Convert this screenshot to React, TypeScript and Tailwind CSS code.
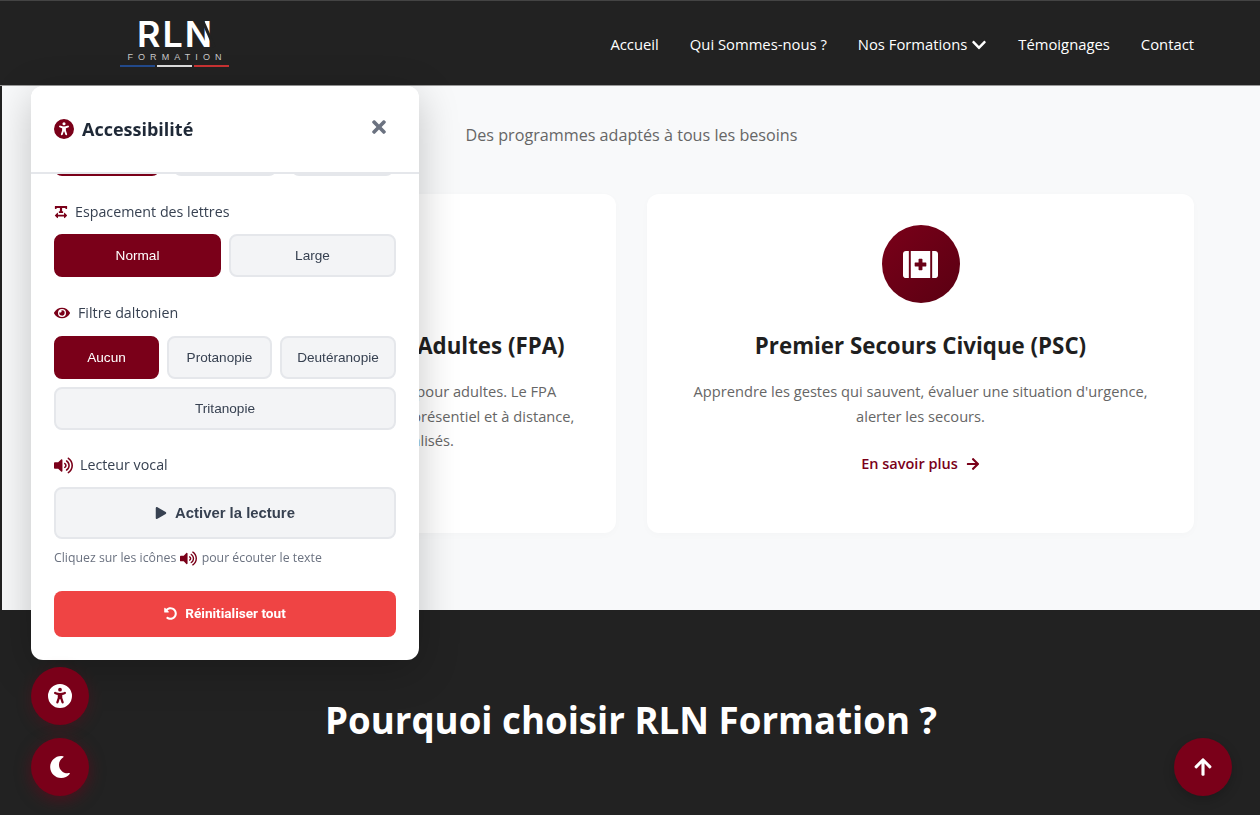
import { FaTimes, FaTextWidth, FaEye, FaVolumeUp, FaPlay, FaUndoAlt, FaMoon, FaArrowUp, FaArrowRight, FaChevronDown, FaFirstAid } from "react-icons/fa";
import { FaUniversalAccess } from "react-icons/fa6";

const sans = "font-['Open_Sans','Noto_Sans',sans-serif]";

function Opt({ active, className = "", children }: { active?: boolean; className?: string; children: React.ReactNode }) {
  return (
    <button className={`h-[43px] pt-[1px] rounded-lg border-2 text-[13.6px] font-['Liberation_Sans',sans-serif] ${active ? "bg-[#7a0019] border-[#7a0019] text-white font-medium" : "bg-[#f3f4f6] border-[#e5e7eb] text-[#374151]"} ${className}`}>
      {children}
    </button>
  );
}

function Label({ icon, children, gap = "gap-2" }: { icon: React.ReactNode; children: React.ReactNode; gap?: string }) {
  return (
    <div className={`flex items-center ${gap} h-5 text-[14.25px] font-medium text-[#374151] ${sans}`}>
      <span className="text-[#7a0019]">{icon}</span>
      <span>{children}</span>
    </div>
  );
}

function Panel() {
  return (
    <div className="fixed left-[31px] top-[86px] w-[388px] h-[574px] bg-white rounded-xl shadow-[0_10px_40px_rgba(0,0,0,0.22)] flex flex-col overflow-hidden z-20">
      <div className="h-[88px] shrink-0 border-b-2 border-[#e5e7eb] flex items-center justify-between pl-[23px] pr-[30px] bg-white relative z-10">
        <div className={`flex items-center gap-2 text-[18px] font-bold text-[#1f2937] ${sans}`}>
          <FaUniversalAccess className="text-[#7a0019] text-[20px]" />
          <span>Accessibilité</span>
        </div>
        <FaTimes className="text-[#6b7280] text-[20px] mb-[5px]" />
      </div>
      <div className="flex-1 overflow-hidden px-[23px]">
        <div className="flex gap-2 -mt-[41px] mb-[26px]">
          <Opt active className="w-[106px]">Normal</Opt>
          <Opt className="w-[104px] ml-[5px]">Grand</Opt>
          <Opt className="w-[103px] ml-[6px]">Très grand</Opt>
        </div>
        <Label gap="gap-[7px]" icon={<FaTextWidth className="text-[14px]" />}>Espacement des lettres</Label>
        <div className="grid grid-cols-2 gap-2 mt-[12px]">
          <Opt active>Normal</Opt>
          <Opt>Large</Opt>
        </div>
        <div className="mt-[26px]">
          <Label icon={<FaEye className="text-[16px]" />}>Filtre daltonien</Label>
        </div>
        <div className="flex flex-wrap gap-2 mt-[13px]">
          <Opt active className="w-[105px]">Aucun</Opt>
          <Opt className="w-[105px]">Protanopie</Opt>
          <Opt className="flex-1">Deutéranopie</Opt>
          <Opt className="w-full">Tritanopie</Opt>
        </div>
        <div className="mt-[25px]">
          <Label icon={<FaVolumeUp className="text-[19px]" />} gap="gap-[7px]">Lecteur vocal</Label>
        </div>
        <button className="mt-[12px] w-full h-[52px] rounded-lg border-2 border-[#e5e7eb] bg-[#f3f4f6] flex items-center justify-center gap-2 text-[14.88px] font-bold text-[#374151] font-['Liberation_Sans',sans-serif]">
          <FaPlay className="text-[12px]" />
          Activer la lecture
        </button>
        <p className={`mt-[11px] h-4 flex items-center text-[12.3px] text-[#6b7280] ${sans}`}>
          Cliquez sur les icônes&nbsp;<FaVolumeUp className="text-[#7a0019] text-[17px] mx-[1px]" />&nbsp;pour écouter le texte
        </p>
        <button className="mt-[25px] w-full h-[46px] pb-[2px] rounded-lg bg-[#ef4444] flex items-center justify-center gap-2 text-[13.6px] font-bold text-white font-['Roboto',sans-serif]">
          <FaUndoAlt className="text-[13px]" />
          Réinitialiser tout
        </button>
      </div>
    </div>
  );
}

function Card({ icon, title, children, className = "flex-1" }: { icon?: React.ReactNode; title: string; children: React.ReactNode; className?: string }) {
  return (
    <div className={`bg-white rounded-xl pt-[31px] h-[339px] flex flex-col items-center text-center shadow-[0_2px_8px_rgba(0,0,0,0.02)] ${className}`}>
      <div className="w-[78px] h-[78px] rounded-full bg-gradient-to-br from-[#7a0019] to-[#5a0012] flex items-center justify-center text-white text-[35px]">
        {icon}
      </div>
      <h3 className="mt-[26px] text-[22.3px] font-bold text-[#1f1f1f] leading-[34px] whitespace-nowrap">{title}</h3>
      <p className="mt-[16px] text-[14.66px] leading-[24.5px] text-[#666] whitespace-nowrap">{children}</p>
      <a className="mt-[24px] flex items-center gap-2 text-[14.5px] font-semibold text-[#7a0019] leading-[24px]">
        En savoir plus <FaArrowRight className="text-[14px]" />
      </a>
    </div>
  );
}

function Logo() {
  return (
    <div className="w-[109px] flex flex-col items-center">
      <div className="relative h-[30px] pl-[2px] flex items-center text-[36px] font-semibold tracking-[2px] text-white leading-[30px] font-['Inter',sans-serif]">
        RLN
        <span className="absolute right-[4px] top-[1px] w-[3px] h-[28px] bg-[#222] rotate-[-24deg]" />
      </div>
      <div className="mt-[3px] text-[9px] leading-[11px] tracking-[5.1px] pl-[5px] text-[#c8c8c8] font-['Liberation_Sans',sans-serif]">FORMATION</div>
      <div className="mt-[2px] w-full flex justify-between">
        <span className="w-[35px] h-[2px] bg-[#234a8c]" />
        <span className="w-[35px] h-[2px] bg-[#dddddd]" />
        <span className="w-[35px] h-[2px] bg-[#c83232]" />
      </div>
    </div>
  );
}

export default function App() {
  return (
    <div className={`h-[815px] overflow-hidden bg-[#222] pl-[2px] ${sans}`}>
      <header className="h-[86px] -ml-[2px] bg-[#222] border-t border-[#444] border-b border-b-[#999] flex items-center justify-between pl-[120px] pr-[66px]">
        <Logo />
        <nav className="flex items-center gap-[31px] pt-[3px] text-[14.8px] text-white">
          <a>Accueil</a>
          <a>Qui Sommes-nous ?</a>
          <a className="flex items-center gap-[4px]">Nos Formations <FaChevronDown className="text-[16px]" /></a>
          <a>Témoignages</a>
          <a>Contact</a>
        </nav>
      </header>
      <section className="h-[524px] bg-[#f8f9fa] pt-[37px] pl-[64px] pr-[66px]">
        <p className="text-center text-[16.15px] leading-6 text-[#666] pl-[3px]">Des programmes adaptés à tous les besoins</p>
        <div className="flex gap-[31px] mt-[47px]">
          <Card title="Formation Professionnelle Adultes (FPA)">
            Développer ses savoirs via des formations pour adultes. Le FPA<br />
            et elle s'organise selon vos disponibilités, en présentiel et à distance,<br />
            avec des parcours personnalisés.
          </Card>
          <Card className="w-[547px] shrink-0" icon={<FaFirstAid />} title="Premier Secours Civique (PSC)">
            Apprendre les gestes qui sauvent, évaluer une situation d'urgence,<br />
            alerter les secours.
          </Card>
        </div>
      </section>
      <section className="pt-[85px] text-center">
        <h2 className="text-[36.65px] leading-[50px] font-bold text-white">Pourquoi choisir RLN Formation ?</h2>
      </section>
      <Panel />
      <button className="fixed left-[31px] top-[667px] w-[58px] h-[58px] rounded-full bg-[#7a0019] text-white text-[24px] flex items-center justify-center shadow-[0_4px_15px_rgba(122,0,25,0.3)] z-30">
        <FaUniversalAccess />
      </button>
      <button className="fixed left-[31px] top-[738px] w-[58px] h-[58px] rounded-full bg-[#7a0019] text-white text-[22px] flex items-center justify-center shadow-[0_4px_15px_rgba(122,0,25,0.5)] z-30">
        <FaMoon />
      </button>
      <button className="fixed left-[1174px] top-[738px] w-[58px] h-[58px] rounded-full bg-[#7a0019] text-white text-[20px] flex items-center justify-center shadow-[0_4px_12px_rgba(0,0,0,0.2)] z-30">
        <FaArrowUp />
      </button>
    </div>
  );
}
